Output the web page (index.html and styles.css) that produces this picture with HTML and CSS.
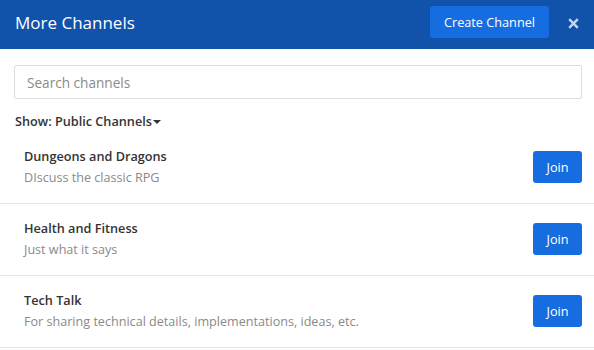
FILE: index.html
```html
<!DOCTYPE html>
<html>
<head>
<meta charset="utf-8">
<link rel="stylesheet" href="styles.css">
</head>
<body>
<div class="modal">
  <header class="modal-header">
    <h1 class="title">More Channels</h1>
    <div class="header-actions">
      <button class="btn btn-create">Create Channel</button>
      <button class="close" aria-label="Close">
        <svg width="11" height="11" viewBox="0 0 11 11"><path d="M1.2 1.2 L9.8 9.8 M9.8 1.2 L1.2 9.8" stroke="#c9d6ea" stroke-width="2.4" stroke-linecap="butt"/></svg>
      </button>
    </div>
  </header>
  <div class="modal-body">
    <div class="search-wrap">
      <input class="search" type="text" placeholder="Search channels">
    </div>
    <div class="filter">Show: Public Channels<span class="caret"></span></div>
    <ul class="channel-list">
      <li class="channel">
        <div class="info">
          <div class="name">Dungeons and Dragons</div>
          <div class="desc">DIscuss the classic RPG</div>
        </div>
        <button class="btn btn-join">Join</button>
      </li>
      <li class="channel">
        <div class="info">
          <div class="name">Health and Fitness</div>
          <div class="desc">Just what it says</div>
        </div>
        <button class="btn btn-join">Join</button>
      </li>
      <li class="channel">
        <div class="info">
          <div class="name">Tech Talk</div>
          <div class="desc">For sharing technical details, implementations, ideas, etc.</div>
        </div>
        <button class="btn btn-join">Join</button>
      </li>
    </ul>
  </div>
</div>
</body>
</html>
```
FILE: styles.css
```css
* { box-sizing: border-box; }
html, body { margin: 0; padding: 0; background: #fff; }
body { font-family: "Open Sans", "Liberation Sans", sans-serif; color: #333; width: 594px; height: 350px; overflow: hidden; }

.modal-header {
  height: 49px;
  background: #1153ab;
  display: flex;
  align-items: center;
  justify-content: space-between;
  padding: 0 15px 0 15px;
}
.title {
  margin: 0;
  font-size: 17px;
  font-weight: 400;
  color: #fff;
  line-height: 24px;
  margin-top: -4px;
}
.header-actions { display: flex; align-items: center; margin-top: -6px; }
.btn {
  font-family: inherit;
  border: none;
  background: #166de0;
  color: #fff;
  border-radius: 3px;
  cursor: pointer;
}
.btn-create {
  height: 32px;
  width: 119px;
  font-size: 12.7px;
  padding: 0;
}
.close {
  background: none;
  border: none;
  padding: 0;
  margin-left: 19px;
  width: 11px;
  height: 11px;
  display: flex;
  margin-top: 4px;
}

.modal-body { padding-top: 16px; }
.search-wrap { padding: 0 12px 0 14px; }
.search {
  display: block;
  width: 100%;
  height: 34px;
  border: 1px solid #dcdcdc;
  border-radius: 2px;
  padding: 0 12px;
  font-family: inherit;
  font-size: 13.6px;
  color: #333;
  outline: none;
}
.search::placeholder { color: #8a8a8a; }

.filter {
  margin: 13px 0 0 15px;
  font-size: 12.7px;
  font-weight: 600;
  line-height: 18px;
  color: #333;
  display: flex;
  align-items: center;
}
.caret {
  display: inline-block;
  width: 0; height: 0;
  border-left: 4px solid transparent;
  border-right: 4px solid transparent;
  border-top: 4px solid #333;
  margin-left: 1px;
  margin-top: 1px;
}

.channel-list { list-style: none; margin: 2px 0 0; padding: 0; }
.channel {
  display: flex;
  align-items: center;
  justify-content: space-between;
  height: 72px;
  padding: 0 12px 0 24px;
  border-bottom: 1px solid #e6e6e6;
}
.info { align-self: flex-start; padding-top: 15px; }
.name { font-size: 12.7px; font-weight: 600; line-height: 18px; color: #333; }
.desc { font-size: 12.6px; line-height: 18px; color: #8a8a8a; margin-top: 4px; }
.btn-join {
  width: 49px;
  height: 32px;
  font-size: 12.7px;
  padding: 0;
  margin-bottom: 1px;
}
```
